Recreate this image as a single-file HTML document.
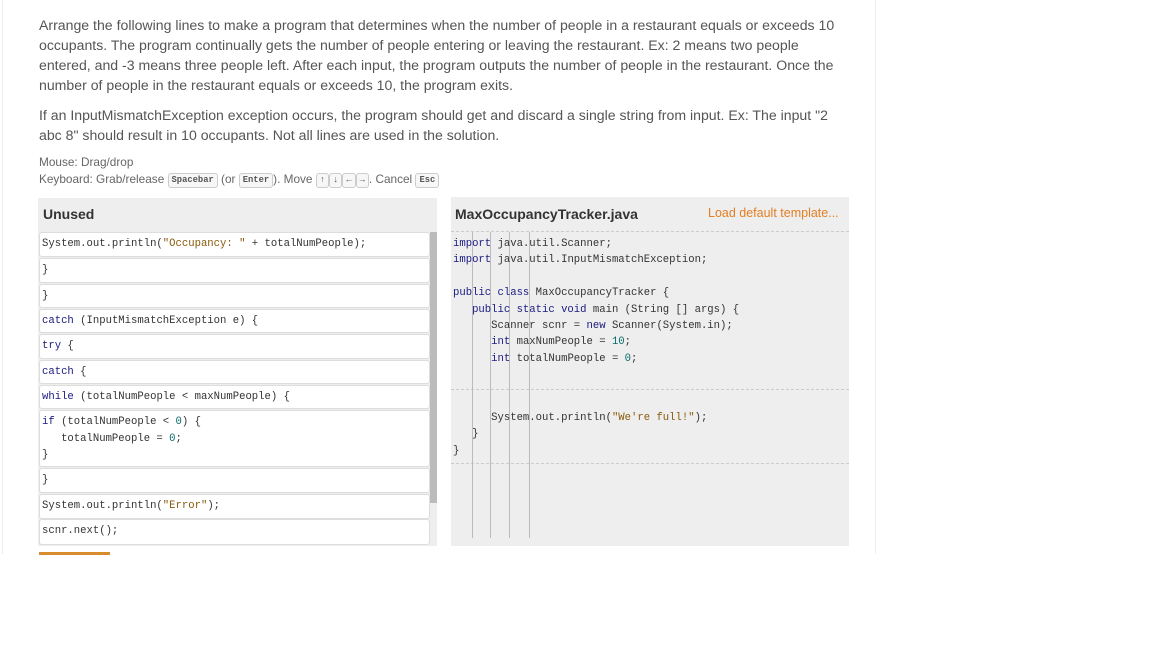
<!DOCTYPE html>
<html><head><meta charset="utf-8"><style>
*{margin:0;padding:0;box-sizing:border-box}
body{width:1152px;height:648px;background:#fff;position:relative;overflow:hidden;font-family:"Liberation Sans",sans-serif;color:#555}
.frame{position:absolute;left:2px;top:0;width:874px;height:554px;border-left:1px solid #eee;border-right:1px solid #eee}
.p{position:absolute;left:39px;width:812px;font-size:14.1px;line-height:20px;color:#555}
.s{position:absolute;left:39px;font-size:11.8px;color:#666}
kbd{display:inline-block;font-family:"Liberation Mono",monospace;font-size:8.8px;font-weight:bold;border:1px solid #ccc;border-radius:3px;padding:1px 3px;color:#555;background:#f7f7f7;line-height:11px;vertical-align:1px}
.mono{font-family:"Liberation Mono",monospace;font-size:10.6px}
.panel{position:absolute;background:#eee}
.item{position:absolute;left:39px;width:391px;background:#fff;border:1px solid #ddd;border-radius:3px;padding:3px 2px;line-height:16.5px;white-space:pre;color:#333}
.kw{color:#1a1a80}.str{color:#8a5a0a}.num{color:#0a6a6a}
.code{position:absolute;left:453px;white-space:pre;color:#333;line-height:16.4px}
.vl{position:absolute;top:232px;height:306px;width:1px;background:#bbb}
.dash{position:absolute;left:451px;width:398px;border-top:1px dashed #ccc}
</style></head><body>
<div class="frame"></div>
<div class="p" style="top:15px">Arrange the following lines to make a program that determines when the number of people in a restaurant equals or exceeds 10 occupants. The program continually gets the number of people entering or leaving the restaurant. Ex: 2 means two people entered, and -3 means three people left. After each input, the program outputs the number of people in the restaurant. Once the number of people in the restaurant equals or exceeds 10, the program exits.</div>
<div class="p" style="top:105px">If an InputMismatchException exception occurs, the program should get and discard a single string from input. Ex: The input "2 abc 8" should result in 10 occupants. Not all lines are used in the solution.</div>
<div class="s" style="top:155px">Mouse: Drag/drop</div>
<div class="s" style="top:172px">Keyboard: Grab/release <kbd>Spacebar</kbd> (or <kbd>Enter</kbd>). Move <kbd>↑</kbd><kbd>↓</kbd><kbd>←</kbd><kbd>→</kbd>. Cancel <kbd>Esc</kbd></div>

<div class="panel" style="left:38px;top:198px;width:399px;height:348px"></div>
<div style="position:absolute;left:43px;top:206px;font-size:14px;font-weight:bold;color:#333">Unused</div>
<div style="position:absolute;left:430px;top:232px;width:7px;height:271px;background:#bbb"></div>
<div class="mono">
<div class="item" style="top:232px;height:25px">System.out.println(<span class="str">"Occupancy: "</span> + totalNumPeople);</div>
<div class="item" style="top:258px;height:25px">}</div>
<div class="item" style="top:284px;height:24px">}</div>
<div class="item" style="top:309px;height:24px"><span class="kw">catch</span> (InputMismatchException e) {</div>
<div class="item" style="top:334px;height:25px"><span class="kw">try</span> {</div>
<div class="item" style="top:360px;height:24px"><span class="kw">catch</span> {</div>
<div class="item" style="top:385px;height:24px"><span class="kw">while</span> (totalNumPeople &lt; maxNumPeople) {</div>
<div class="item" style="top:410px;height:57px"><span class="kw">if</span> (totalNumPeople &lt; <span class="num">0</span>) {
   totalNumPeople = <span class="num">0</span>;
}</div>
<div class="item" style="top:468px;height:25px">}</div>
<div class="item" style="top:494px;height:25px">System.out.println(<span class="str">"Error"</span>);</div>
<div class="item" style="top:519px;height:26px">scnr.next();</div>
</div>
<div style="position:absolute;left:39px;top:552px;width:71px;height:3px;background:#d98c2e"></div>

<div class="panel" style="left:451px;top:197px;width:398px;height:349px"></div>
<div style="position:absolute;left:455px;top:206px;font-size:14px;font-weight:bold;color:#333">MaxOccupancyTracker.java</div>
<div style="position:absolute;left:708px;top:206px;font-size:12.5px;color:#e67e22">Load default template...</div>
<div class="dash" style="top:231px"></div>
<div class="dash" style="top:389px"></div>
<div class="dash" style="top:463px"></div>
<div class="vl" style="left:472px"></div><div class="vl" style="left:490px"></div><div class="vl" style="left:509px"></div><div class="vl" style="left:529px"></div>
<div class="mono">
<div class="code" style="top:236px"><span class="kw">import</span> java.util.Scanner;
<span class="kw">import</span> java.util.InputMismatchException;

<span class="kw">public class</span> MaxOccupancyTracker {
   <span class="kw">public static void</span> main (String [] args) {
      Scanner scnr = <span class="kw">new</span> Scanner(System.in);
      <span class="kw">int</span> maxNumPeople = <span class="num">10</span>;
      <span class="kw">int</span> totalNumPeople = <span class="num">0</span>;</div>
<div class="code" style="top:410px">      System.out.println(<span class="str">"We're full!"</span>);
   }
}</div>
</div>
</body></html>
